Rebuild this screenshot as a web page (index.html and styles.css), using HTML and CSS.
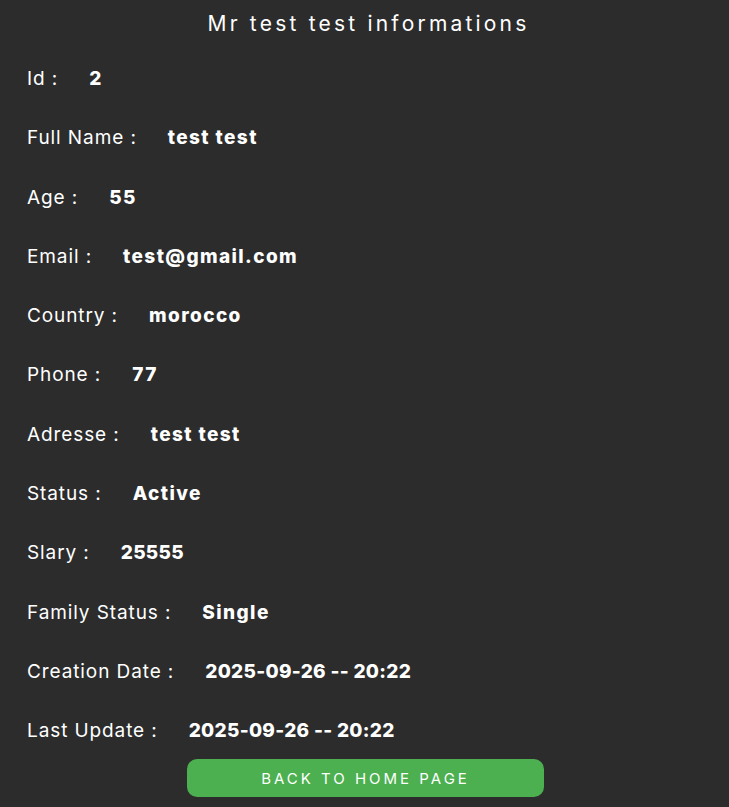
FILE: index.html
```html
<!DOCTYPE html>
<html>
<head>
<meta charset="utf-8">
<link rel="stylesheet" href="styles.css">
</head>
<body>
<div class="page">
  <h2 class="title">Mr test test informations</h2>
  <div class="rows">
    <div class="row"><span class="label">Id :</span><span class="value">2</span></div>
    <div class="row"><span class="label">Full Name :</span><span class="value">test test</span></div>
    <div class="row"><span class="label">Age :</span><span class="value">55</span></div>
    <div class="row"><span class="label">Email :</span><span class="value">test@gmail.com</span></div>
    <div class="row"><span class="label">Country :</span><span class="value">morocco</span></div>
    <div class="row"><span class="label">Phone :</span><span class="value">77</span></div>
    <div class="row"><span class="label">Adresse :</span><span class="value">test test</span></div>
    <div class="row"><span class="label">Status :</span><span class="value">Active</span></div>
    <div class="row"><span class="label">Slary :</span><span class="value num">25555</span></div>
    <div class="row"><span class="label">Family Status :</span><span class="value">Single</span></div>
    <div class="row"><span class="label">Creation Date :</span><span class="value num">2025-09-26 -- 20:22</span></div>
    <div class="row"><span class="label">Last Update :</span><span class="value num">2025-09-26 -- 20:22</span></div>
  </div>
  <div class="actions">
    <a class="btn" href="#">BACK TO HOME PAGE</a>
  </div>
</div>
</body>
</html>
```
FILE: styles.css
```css
html, body {
  margin: 0;
  padding: 0;
  background: #2c2c2c;
}
body {
  font-family: Inter, "Noto Sans", sans-serif;
  color: #ffffff;
  height: 807px;
  overflow: hidden;
}
.page {
  display: flex;
  flex-direction: column;
}
.title {
  margin: 0;
  padding-top: 10px;
  padding-left: 8px;
  height: 28px;
  text-align: center;
  font-size: 21px;
  font-weight: 400;
  letter-spacing: 3.2px;
  line-height: 28px;
}
.rows {
  display: flex;
  flex-direction: column;
  padding-left: 27px;
  margin-top: 11px;
}
.row {
  display: flex;
  align-items: center;
  height: 59.27px;
  font-size: 19px;
}
.label {
  font-weight: 400;
  letter-spacing: 0.9px;
  margin-right: 31px;
}
.value {
  font-weight: 800;
  letter-spacing: 1.4px;
}
.value.num {
  letter-spacing: 0.3px;
}
.actions {
  display: flex;
  justify-content: center;
  margin-top: -1px;
}
.btn {
  display: flex;
  align-items: center;
  justify-content: center;
  width: 357px;
  height: 38px;
  margin-left: 2px;
  background: #4caf50;
  color: #ffffff;
  border-radius: 10px;
  text-decoration: none;
  font-size: 15px;
  letter-spacing: 3px;
}
```
